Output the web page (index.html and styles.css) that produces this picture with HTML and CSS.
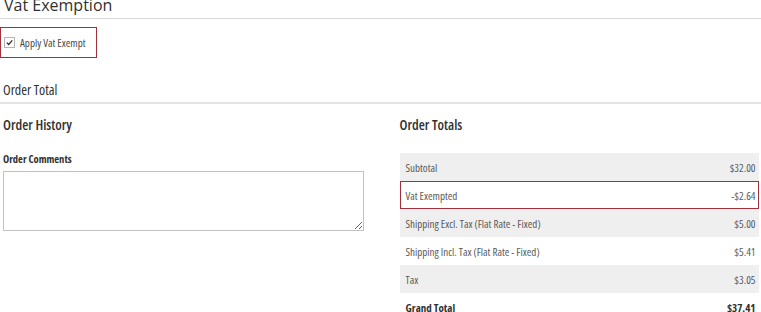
FILE: index.html
```html
<!DOCTYPE html>
<html lang="en">
<head>
  <meta charset="UTF-8">
  <title>Order Totals</title>
  <link rel="stylesheet" href="styles.css">
</head>
<body>
  <div class="section-title first">Vat Exemption</div>

  <label class="vat-box">
    <span class="check">
      <svg width="7" height="7" viewBox="0 0 7 7"><path d="M0.8 3.6 L2.7 5.5 L6.3 1.3" fill="none" stroke="#303030" stroke-width="1.3"/></svg>
    </span>
    <span>Apply Vat Exempt</span>
  </label>

  <div class="section-title second">Order Total</div>

  <div class="order-cols">
    <div class="col">
      <h3>Order History</h3>
      <div class="field-label">Order Comments</div>
      <textarea class="comments"></textarea>
    </div>
    <div class="col">
      <h3>Order Totals</h3>
      <table class="totals">
        <tr><td>Subtotal</td><td>$32.00</td></tr>
        <tr class="exempt"><td>Vat Exempted</td><td>-$2.64</td></tr>
        <tr><td>Shipping Excl. Tax (Flat Rate - Fixed)</td><td>$5.00</td></tr>
        <tr><td>Shipping Incl. Tax (Flat Rate - Fixed)</td><td>$5.41</td></tr>
        <tr><td>Tax</td><td>$3.05</td></tr>
        <tr class="grand"><td>Grand Total</td><td>$37.41</td></tr>
      </table>
    </div>
  </div>
</body>
</html>
```

FILE: styles.css
```css
body {
  margin: 0;
  font-family: "Open Sans", Arial, sans-serif;
  color: #303030;
  background: #fff;
}
.section-title {
  font-size: 16px;
  line-height: 22px;
  color: #303030;
}
.section-title.first {
  margin-top: -6px;
  padding: 0 0 2px 4px;
  border-bottom: 1px solid #d8d8d8;
}
.section-title.second {
  margin-top: 21px;
  padding: 0 0 1px 3px;
  font-size: 14px;
  font-stretch: 75%;
  border-bottom: 2px solid #e3e3e3;
}
.vat-box {
  display: flex;
  align-items: center;
  gap: 5px;
  width: 97px;
  height: 31px;
  margin-top: 8px;
  padding-left: 3px;
  box-sizing: border-box;
  border: 1px solid #a3303b;
  font-size: 11px;
  font-stretch: 75%;
  color: #4a4a4a;
}
.check {
  display: flex;
  align-items: center;
  justify-content: center;
  width: 9px;
  height: 9px;
  border: 1px solid #b5b5b5;
  background: #fff;
}
.order-cols {
  display: flex;
  gap: 35px;
  margin-top: 11px;
  font-stretch: 75%;
}
.col {
  width: 362px;
}
.col:first-child {
  padding-left: 3px;
}
.col h3 {
  margin: 0 0 18px 0;
  font-size: 14px;
  font-weight: 600;
  line-height: 20px;
}
.field-label {
  margin: 0 0 6px 0;
  font-size: 10.5px;
  font-weight: 700;
  line-height: 12px;
}
.comments {
  display: block;
  width: 361px;
  height: 60px;
  box-sizing: border-box;
  border: 1px solid #c2c2c2;
  resize: vertical;
}
.totals {
  width: 359px;
  border-collapse: collapse;
  font-size: 11px;
  color: #5a5a5a;
}
.totals td {
  height: 28px;
  padding: 0 3px 0 6px;
}
.totals td:last-child {
  text-align: right;
}
.totals tr:nth-child(odd) {
  background: #efefef;
}
.totals tr.exempt {
  background: #fff;
  outline: 1px solid #a3303b;
  outline-offset: -1px;
}
.totals tr.grand td {
  font-weight: 700;
  color: #303030;
}
```
